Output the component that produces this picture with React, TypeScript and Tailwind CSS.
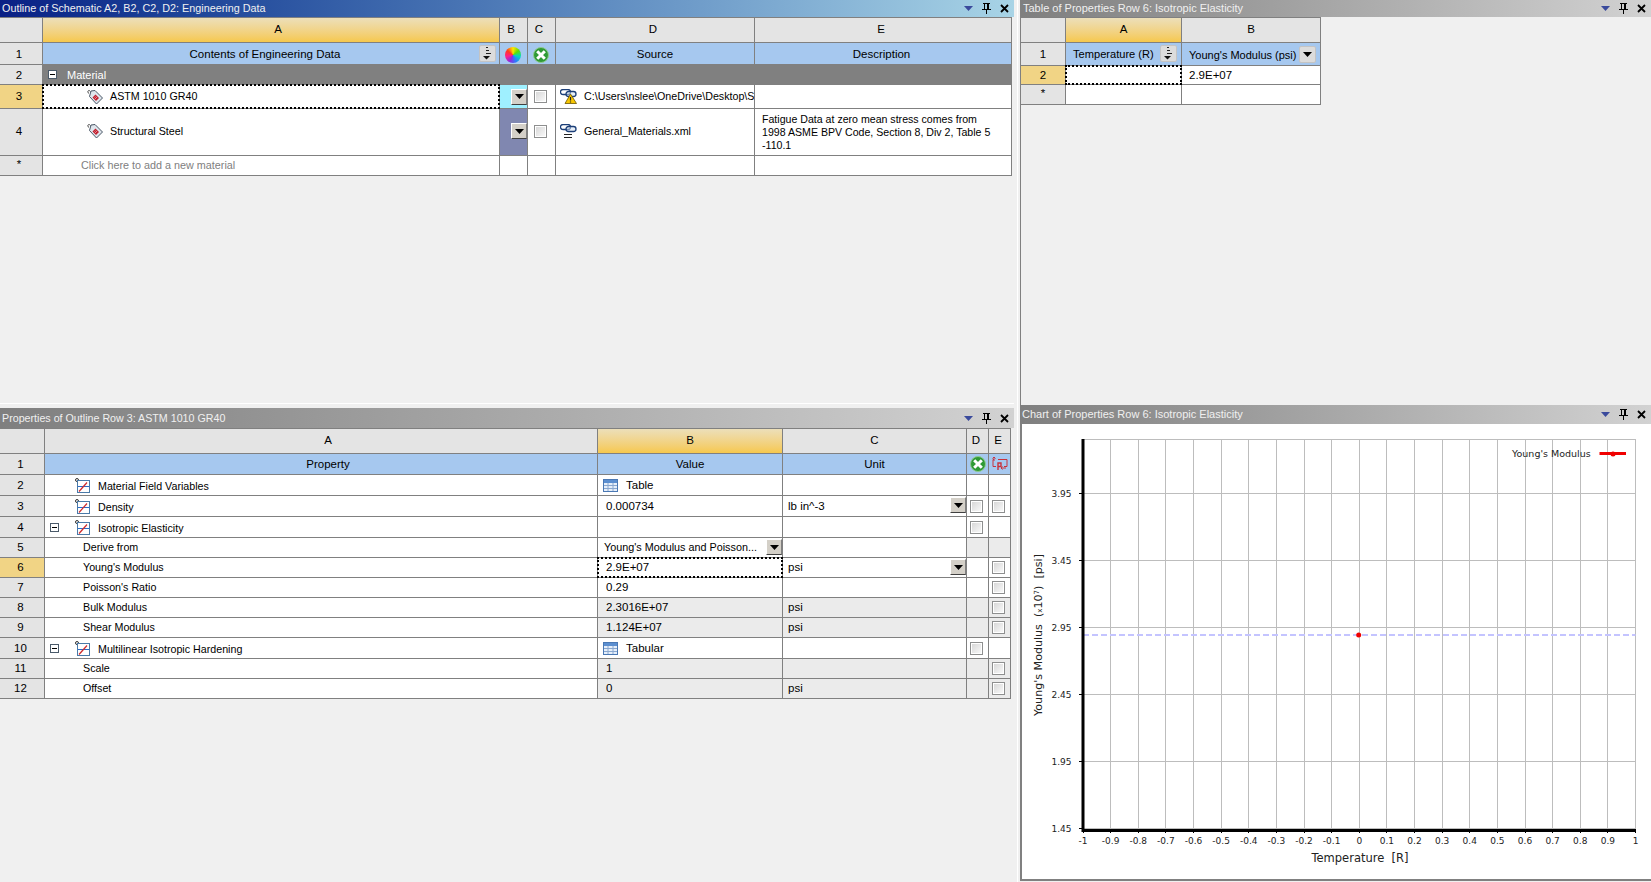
import React from "react";
import clsx from "clsx";

const cell =
  "flex shrink-0 items-center overflow-hidden whitespace-nowrap border-r border-b border-[#808080]";
// header rows sit a pixel lower than the plain rows
const hd = clsx(cell, "pt-[2px]");

const Triangle = () => (
  <svg width="9" height="5" viewBox="0 0 9 5">
    <path d="M0 0h9L4.5 5z" fill="#000" />
  </svg>
);

const DropBtn = ({ className }: { className?: string }) => (
  <div
    className={clsx(
      "flex h-[16px] w-[16px] shrink-0 items-center justify-center border border-t-white border-l-white border-r-[#808080] border-b-[#404040] bg-[#d4d0c8]",
      className
    )}
  >
    <Triangle />
  </div>
);

const Check = () => (
  <div className="h-[13px] w-[13px] shrink-0 border border-[#8e8f8f] bg-white p-[1px]">
    <div className="h-full w-full bg-linear-to-br from-[#d8d8d8] to-[#f8f8f8]" />
  </div>
);

const MinusBox = ({ className }: { className?: string }) => (
  <div
    className={clsx(
      "flex h-[9px] w-[9px] shrink-0 items-center justify-center border border-[#4a5a6a] bg-white",
      className
    )}
  >
    <div className="h-px w-[5px] bg-black" />
  </div>
);

const SortBtn = ({ className }: { className?: string }) => (
  <div
    className={clsx(
      "flex h-[17px] w-[17px] shrink-0 items-center justify-center rounded-[2px] border border-[#c4c4c4] bg-[#dcdcdc]",
      className
    )}
  >
    <svg width="9" height="13" viewBox="0 0 9 13">
      <path d="M3 0h2v1H3zM3 3h3v1H3zM3 6h5v1H3z" fill="#222" />
      <path d="M0 9h7L3.5 12.5z" fill="#111" />
    </svg>
  </div>
);

const Wheel = () => (
  <div className="h-[16px] w-[16px] shrink-0 rounded-full bg-[conic-gradient(#ffe600,#5fe000,#00d8c0,#2a7cff,#8a2be2,#ff1e8c,#ff3b1e,#ffe600)]" />
);

const GreenX = () => (
  <svg width="16" height="16" viewBox="0 0 16 16" className="shrink-0">
    <circle cx="8" cy="8" r="7.500" fill="#2f9a35" stroke="#8fc98f" />
    <path d="M4.200 4.200l7.600 7.600M11.800 4.200l-7.600 7.600" stroke="#fff" strokeWidth="3" />
  </svg>
);

const ParamIcon = () => (
  <svg width="16" height="14" viewBox="0 0 16 14" fill="none" stroke="#c8323c" className="shrink-0">
    <path d="M6 2.500h9v7h-3M4 9.500H1v-7h1" />
    <path d="M2 4V0M.5 1.500L2 0l1.500 1.500M14 11H9M10.500 9.500L9 11l1.500 1.500" />
    <path d="M6 13V6h3v3.500H6" strokeWidth="1.400" />
  </svg>
);

const TagIcon = () => (
  <svg width="16" height="16" viewBox="0 0 16 16" className="shrink-0">
    <path d="M3.500 2.500c-2-2.500-4 .5-1.500 2" fill="none" stroke="#444" />
    <path d="M4 2L8 1.500L15.500 9L9.500 15L2.500 7.500z" fill="#dfe5ec" stroke="#4a5666" />
    <path d="M8.500 5.500L12 9L9 12L5.500 8.500z" fill="#c0202f" />
    <path d="M8.500 7.500L10 9M7.500 8.500L9 10" stroke="#e88a94" />
  </svg>
);

const LinkIcon = ({ warn }: { warn?: boolean }) => (
  <svg width="17" height="15" viewBox="0 0 17 15" fill="none" className="shrink-0">
    <rect x="0.500" y="0.500" width="10" height="5" rx="2.500" stroke="#1c3f78" strokeWidth="1.300" />
    <rect x="6" y="2.500" width="10" height="5" rx="2.500" stroke="#1c3f78" strokeWidth="1.300" fill="#cfe0f2" fillOpacity="0.500" />
    {warn ? (
      <>
        <path d="M10.500 5L16.500 14.500H5z" fill="#f7c600" stroke="#6b5500" strokeWidth="0.800" />
        <path d="M10.500 8v3.500M10.500 12.500v1" stroke="#222" strokeWidth="1.200" />
      </>
    ) : (
      <path d="M4 10.500h8M4 13.500h8" stroke="#222" />
    )}
  </svg>
);

const CurveIcon = () => (
  <svg width="15" height="15" viewBox="0 0 15 15" fill="none" className="shrink-0">
    <circle cx="2" cy="2" r="1.500" stroke="#333" />
    <rect x="2.500" y="2.500" width="12" height="12" fill="#fff" stroke="#4a7aa8" />
    <path d="M3 8.500h11" stroke="#2a6ac8" />
    <path d="M4 13.500L12 4.500" stroke="#d02a2a" strokeWidth="1.200" />
  </svg>
);

const TableIcon = () => (
  <svg width="15" height="13" viewBox="0 0 15 13" className="shrink-0">
    <rect x="0.500" y="0.500" width="14" height="12" fill="#e6effa" stroke="#4a78b4" />
    <rect x="1" y="1" width="13" height="3" fill="#5c8fd0" />
    <path d="M1 6.500h13M1 9.500h13M5 4v8M10 4v8" stroke="#8aa8d0" />
  </svg>
);

const PaneControls = () => (
  <div className="ml-auto flex items-center pr-px">
    <div className="flex w-[18px] justify-center">
      <svg width="9" height="5" viewBox="0 0 9 5">
        <path d="M0 0h9L4.500 5z" fill="#3a4a9c" />
      </svg>
    </div>
    <div className="flex w-[18px] justify-center">
      <svg width="9" height="11" viewBox="0 0 9 11" fill="none" stroke="#000">
        <path d="M2.500 .5v5.500M6.500 .5v5.500M1 .5h7M0 6.500h9" />
        <path d="M4.500 7v4M5.500 1v5" />
      </svg>
    </div>
    <div className="flex w-[18px] justify-center">
      <svg width="9" height="9" viewBox="0 0 9 9">
        <path d="M1 1l7 7M8 1l-7 7" stroke="#000" strokeWidth="1.800" />
      </svg>
    </div>
  </div>
);

const PaneTitle = ({ text, className }: { text: string; className: string }) => (
  <div className={clsx("flex shrink-0 items-center bg-linear-to-r pl-[2px] text-[#f0f0f0]", className)}>
    <span>{text}</span>
    <PaneControls />
  </div>
);

const Focus = () => <div className="absolute -inset-px border-2 border-dotted border-black" />;

const topCols = ["w-[43px]", "w-[457px]", "w-[28px]", "w-[28px]", "w-[199px]", "w-[257px]"];

function OutlineTable() {
  const [c0, c1, c2, c3, c4, c5] = topCols;
  return (
    <div className="w-[1012px] border-t border-[#808080] bg-white">
      <div className="flex h-[25px]">
        <div className={clsx(cell, c0, "bg-[#e4e4e4]")} />
        <div className={clsx(cell, c1, "justify-center bg-linear-to-b from-[#ecdfb9] to-[#f6c84c] pl-[14px]")}>A</div>
        <div className={clsx(cell, c2, "justify-center bg-[#e4e4e4] pr-[5px]")}>B</div>
        <div className={clsx(cell, c3, "justify-center bg-[#e4e4e4] pr-[5px]")}>C</div>
        <div className={clsx(cell, c4, "justify-center bg-[#e4e4e4] pr-[4px]")}>D</div>
        <div className={clsx(cell, c5, "justify-center bg-[#e4e4e4] pr-[4px]")}>E</div>
      </div>
      <div className="flex h-[22px] bg-[#a6c8ef]">
        <div className={clsx(hd, c0, "justify-center bg-[#e4e4e4] pr-[4px]")}>1</div>
        <div className={clsx(hd, c1, "relative justify-center pr-[12px]")}>
          Contents of Engineering Data
          <SortBtn className="absolute top-[2px] right-[3px]" />
        </div>
        <div className={clsx(hd, c2, "pl-[5px]")}>
          <Wheel />
        </div>
        <div className={clsx(hd, c3, "pl-[5px]")}>
          <GreenX />
        </div>
        <div className={clsx(hd, c4, "justify-center")}>Source</div>
        <div className={clsx(hd, c5, "justify-center pr-[3px]")}>Description</div>
      </div>
      <div className="flex h-[20px]">
        <div className={clsx(hd, c0, "justify-center bg-[#e4e4e4] pr-[4px]")}>2</div>
        <div className="flex w-[969px] items-center border-b border-[#808080] bg-[#808080] pl-[5px] text-white">
          <MinusBox />
          <span className="ml-[10px] pt-[2px] text-[11px]">Material</span>
        </div>
      </div>
      <div className="flex h-[24px]">
        <div className={clsx(cell, c0, "justify-center bg-[#f1d485] pr-[4px]")}>3</div>
        <div className={clsx(cell, c1, "relative overflow-visible pl-[44px] text-[10.7px]")}>
          <TagIcon />
          <span className="ml-[7px]">ASTM 1010 GR40</span>
          <Focus />
        </div>
        <div className={clsx(cell, c2, "justify-end bg-[#9ff0ff]")}>
          <DropBtn />
        </div>
        <div className={clsx(cell, c3, "pl-[6px]")}>
          <Check />
        </div>
        <div className={clsx(cell, c4, "pl-[4px] text-[10.7px]")}>
          <LinkIcon warn />
          <span className="ml-[7px]">{"C:\\Users\\nslee\\OneDrive\\Desktop\\Steel.xml"}</span>
        </div>
        <div className={clsx(cell, c5)} />
      </div>
      <div className="flex h-[47px]">
        <div className={clsx(cell, c0, "justify-center bg-[#e4e4e4] pr-[4px]")}>4</div>
        <div className={clsx(cell, c1, "pb-[2px] pl-[44px] text-[10.7px]")}>
          <TagIcon />
          <span className="ml-[7px]">Structural Steel</span>
        </div>
        <div className={clsx(cell, c2, "justify-end bg-[#8087b0] pb-[2px]")}>
          <DropBtn />
        </div>
        <div className={clsx(cell, c3, "pb-px pl-[6px]")}>
          <Check />
        </div>
        <div className={clsx(cell, c4, "pb-[2px] pl-[4px] text-[10.7px]")}>
          <LinkIcon />
          <span className="ml-[7px]">General_Materials.xml</span>
        </div>
        <div className={clsx(cell, c5, "pl-[7px] text-[10.6px] leading-[13px]")}>
          <div>
            <div>Fatigue Data at zero mean stress comes from</div>
            <div>1998 ASME BPV Code, Section 8, Div 2, Table 5</div>
            <div>-110.1</div>
          </div>
        </div>
      </div>
      <div className="flex h-[20px]">
        <div className={clsx(cell, c0, "items-start justify-center bg-[#e4e4e4] pt-[3px] pr-[4px]")}>*</div>
        <div className={clsx(cell, c1, "pl-[38px] text-[10.8px] text-[#808080]")}>Click here to add a new material</div>
        <div className={clsx(cell, c2)} />
        <div className={clsx(cell, c3)} />
        <div className={clsx(cell, c4)} />
        <div className={clsx(cell, c5)} />
      </div>
    </div>
  );
}

type PropRow = {
  n: string;
  h: string;
  name: string;
  kind: "curve" | "sub";
  minus?: boolean;
  value?: string;
  table?: boolean;
  unit?: string;
  unitDrop?: boolean;
  d?: boolean;
  e?: boolean;
  gray?: boolean;
  derive?: boolean;
  focus?: boolean;
};

const propRows: PropRow[] = [
  { n: "2", h: "h-[21px]", name: "Material Field Variables", kind: "curve", value: "Table", table: true },
  { n: "3", h: "h-[21px]", name: "Density", kind: "curve", value: "0.000734", unit: "lb in^-3", unitDrop: true, d: true, e: true },
  { n: "4", h: "h-[21px]", name: "Isotropic Elasticity", kind: "curve", minus: true, d: true },
  { n: "5", h: "h-[20px]", name: "Derive from", kind: "sub", value: "Young's Modulus and Poisson...", derive: true },
  { n: "6", h: "h-[20px]", name: "Young's Modulus", kind: "sub", value: "2.9E+07", unit: "psi", unitDrop: true, e: true, focus: true },
  { n: "7", h: "h-[20px]", name: "Poisson's Ratio", kind: "sub", value: "0.29", e: true },
  { n: "8", h: "h-[20px]", name: "Bulk Modulus", kind: "sub", value: "2.3016E+07", unit: "psi", e: true, gray: true },
  { n: "9", h: "h-[20px]", name: "Shear Modulus", kind: "sub", value: "1.124E+07", unit: "psi", e: true, gray: true },
  { n: "10", h: "h-[21px]", name: "Multilinear Isotropic Hardening", kind: "curve", minus: true, value: "Tabular", table: true, d: true },
  { n: "11", h: "h-[20px]", name: "Scale", kind: "sub", value: "1", e: true, gray: true },
  { n: "12", h: "h-[20px]", name: "Offset", kind: "sub", value: "0", unit: "psi", e: true, gray: true },
];

const botCols = ["w-[45px]", "w-[553px]", "w-[185px]", "w-[184px]", "w-[22px]", "w-[22px]"];

function PropertiesTable() {
  const [c0, c1, c2, c3, c4, c5] = botCols;
  return (
    <div className="w-[1011px] border-t border-[#808080] bg-white">
      <div className="flex h-[25px]">
        <div className={clsx(cell, c0, "bg-[#e4e4e4]")} />
        <div className={clsx(cell, c1, "justify-center bg-[#e4e4e4] pl-[14px]")}>A</div>
        <div className={clsx(cell, c2, "justify-center bg-linear-to-b from-[#ecdfb9] to-[#f6c84c]")}>B</div>
        <div className={clsx(cell, c3, "justify-center bg-[#e4e4e4]")}>C</div>
        <div className={clsx(cell, c4, "justify-center bg-[#e4e4e4] pr-[3px]")}>D</div>
        <div className={clsx(cell, c5, "justify-center bg-[#e4e4e4] pr-[3px]")}>E</div>
      </div>
      <div className="flex h-[21px] bg-[#a6c8ef]">
        <div className={clsx(hd, c0, "justify-center bg-[#e4e4e4] pr-[3px]")}>1</div>
        <div className={clsx(hd, c1, "justify-center pl-[14px]")}>Property</div>
        <div className={clsx(hd, c2, "justify-center")}>Value</div>
        <div className={clsx(hd, c3, "justify-center")}>Unit</div>
        <div className={clsx(cell, c4, "pl-[3px]")}>
          <GreenX />
        </div>
        <div className={clsx(cell, c5, "pl-[3px]")}>
          <ParamIcon />
        </div>
      </div>
      {propRows.map((r) => {
        const low = r.kind === "curve" && "pt-[2px]";
        return (
          <div key={r.n} className={clsx("flex", r.h)}>
            <div className={clsx(cell, c0, "justify-center pr-[3px]", low, r.n === "6" ? "bg-[#f1d485]" : "bg-[#e4e4e4]")}>{r.n}</div>
            <div className={clsx(cell, c1, "relative text-[10.7px]", r.kind === "sub" && "pl-[38px]")}>
              {r.minus && <MinusBox className="absolute left-[5px]" />}
              {r.kind === "curve" && (
                <div className="flex items-center pl-[30px]">
                  <CurveIcon />
                  <span className="ml-[8px] pt-[2px]">{r.name}</span>
                </div>
              )}
              {r.kind === "sub" && r.name}
            </div>
            <div
              className={clsx(
                cell,
                c2,
                "relative",
                r.gray && "bg-[#ebebeb]",
                r.table ? "pl-[5px]" : "pl-[8px]",
                r.focus && "overflow-visible"
              )}
            >
              {r.table && <TableIcon />}
              <span className={clsx(low, r.table && "ml-[8px]", r.derive && "-ml-[2px] text-[10.8px]")}>{r.value}</span>
              {r.derive && <DropBtn className="absolute right-0 top-px" />}
              {r.focus && <Focus />}
            </div>
            <div className={clsx(cell, c3, "relative pl-[5px]", r.gray && "bg-[#ebebeb]")}>
              <span className={clsx(low)}>{r.unit}</span>
              {r.unitDrop && <DropBtn className="absolute right-0 top-[1px]" />}
            </div>
            <div className={clsx(cell, c4, "pl-[3px]", (r.gray || r.derive) && "bg-[#ebebeb]")}>{r.d && <Check />}</div>
            <div className={clsx(cell, c5, "pl-[3px]", (r.gray || r.derive) && "bg-[#ebebeb]")}>{r.e && <Check />}</div>
          </div>
        );
      })}
    </div>
  );
}

function LookupTable() {
  return (
    <div className="w-[300px] border-t border-[#808080] bg-white">
      <div className="flex h-[25px]">
        <div className={clsx(cell, "w-[45px] bg-[#e4e4e4]")} />
        <div className={clsx(cell, "w-[116px] justify-center bg-linear-to-b from-[#ecdfb9] to-[#f6c84c]")}>A</div>
        <div className={clsx(cell, "w-[139px] justify-center bg-[#e4e4e4]")}>B</div>
      </div>
      <div className="flex h-[23px] bg-[#a6c8ef]">
        <div className={clsx(hd, "w-[45px] justify-center bg-[#e4e4e4]")}>1</div>
        <div className={clsx(hd, "relative w-[116px] pl-[7px] text-[11.1px]")}>
          Temperature (R)
          <SortBtn className="absolute top-[2px] right-[4px]" />
        </div>
        <div className={clsx(hd, "relative w-[139px] pl-[7px] text-[11px]")}>
          Young's Modulus (psi)
          <div className="absolute top-[3px] right-[4px] flex h-[17px] w-[17px] items-center justify-center rounded-[2px] border border-[#c4c4c4] bg-[#dcdcdc]">
            <Triangle />
          </div>
        </div>
      </div>
      <div className="flex h-[19px]">
        <div className={clsx(hd, "w-[45px] justify-center bg-[#f1d485]")}>2</div>
        <div className={clsx(cell, "relative w-[116px] overflow-visible")}>
          <Focus />
        </div>
        <div className={clsx(hd, "w-[139px] pl-[7px]")}>2.9E+07</div>
      </div>
      <div className="flex h-[20px]">
        <div className={clsx(cell, "w-[45px] items-start justify-center bg-[#e4e4e4] pt-[3px]")}>*</div>
        <div className={clsx(cell, "w-[116px]")} />
        <div className={clsx(cell, "w-[139px]")} />
      </div>
    </div>
  );
}

const xTicks = ["-1", "-0.9", "-0.8", "-0.7", "-0.6", "-0.5", "-0.4", "-0.3", "-0.2", "-0.1", "0", "0.1", "0.2", "0.3", "0.4", "0.5", "0.6", "0.7", "0.8", "0.9", "1"];
const yTicks = [
  { y: 493.5, t: "3.95" },
  { y: 560.5, t: "3.45" },
  { y: 627.5, t: "2.95" },
  { y: 694.5, t: "2.45" },
  { y: 761.5, t: "1.95" },
  { y: 828.5, t: "1.45" },
];

// drawn in page coordinates, the viewBox takes care of the pane offset
function Chart() {
  const x0 = 1083;
  const x1 = 1635.5;
  const step = (x1 - x0) / 20;
  return (
    <svg
      viewBox="1022 424 629 455"
      width="629"
      height="455"
      className="block font-['DejaVu_Sans',sans-serif]"
    >
      <g stroke="#bdbdbd" shapeRendering="crispEdges">
        <path d={`M${x0} 439.500H${x1}`} />
        {xTicks.map((_, i) => (
          <path key={i} d={`M${x0 + i * step} 439V829`} />
        ))}
        {yTicks.map((t) => (
          <path key={t.t} d={`M${x0} ${t.y}H${x1}`} />
        ))}
      </g>
      <path d={`M${x0} 635H${x1}`} stroke="#c4c4ff" strokeWidth="2" strokeDasharray="6 3" />
      <circle cx="1358.700" cy="635" r="2.500" fill="#f00000" />
      <g stroke="#000" shapeRendering="crispEdges">
        {xTicks.map((_, i) => (
          <path key={i} d={`M${x0 + i * step} 829V833`} />
        ))}
        {yTicks.map((t) => (
          <path key={t.t} d={`M1079 ${t.y}H1083`} />
        ))}
      </g>
      <path d={`M1083 439V830.500H${x1}`} fill="none" stroke="#000" strokeWidth="3" />
      <g fontSize="9" fill="#222">
        {xTicks.map((t, i) => (
          <text key={t} x={x0 + i * step} y="844" textAnchor="middle">
            {t}
          </text>
        ))}
        {yTicks.map((t) => (
          <text key={t.t} x="1071.500" y={t.y + 3.500} textAnchor="end">
            {t.t}
          </text>
        ))}
      </g>
      <text x="1360" y="862" fontSize="11.500" textAnchor="middle" fill="#222">
        {"Temperature\u00a0\u00a0[R]"}
      </text>
      <text transform="rotate(-90 1042 635)" x="1042" y="635" fontSize="11.100" textAnchor="middle" fill="#222">
        {"Young's Modulus\u00a0\u00a0("}
        <tspan fontSize="7">x</tspan>
        10
        <tspan fontSize="7" dy="-3">
          7
        </tspan>
        <tspan dy="3">{")\u00a0\u00a0[psi]"}</tspan>
      </text>
      <text x="1512" y="456.500" fontSize="9.500" fill="#222">
        Young's Modulus
      </text>
      <path d="M1599.500 453.500H1626" stroke="#f00000" strokeWidth="3" />
      <circle cx="1613" cy="454" r="2.500" fill="#f00000" />
    </svg>
  );
}

export default function App() {
  return (
    <div className="flex h-[882px] w-[1651px] overflow-hidden bg-[#f0f0f0] font-['Liberation_Sans',Arial,sans-serif] text-[11.5px] leading-none text-black">
      <div className="flex w-[1014px] shrink-0 flex-col">
        <div className="h-[403px] shrink-0">
          <PaneTitle text="Outline of Schematic A2, B2, C2, D2: Engineering Data" className="h-[17px] from-[#0a1f85] to-[#a8d4e6] text-[10.8px]" />
          <OutlineTable />
        </div>
        <div className="mb-[4px] h-px shrink-0 bg-white" />
        <PaneTitle text="Properties of Outline Row 3: ASTM 1010 GR40" className="h-[20px] from-[#7f7f7f] to-[#d2d2d2] text-[10.7px]" />
        <PropertiesTable />
      </div>
      <div className="flex w-[6px] shrink-0 justify-center">
        <div className="w-px bg-white" />
      </div>
      <div className="flex w-[631px] shrink-0 flex-col">
        <div className="h-[405px] shrink-0 border-l border-[#808080]">
          <PaneTitle text="Table of Properties Row 6: Isotropic Elasticity" className="h-[17px] from-[#7f7f7f] to-[#d2d2d2] text-[11px]" />
          <LookupTable />
        </div>
        <PaneTitle text="Chart of Properties Row 6: Isotropic Elasticity" className="h-[19px] from-[#7f7f7f] to-[#d2d2d2] text-[11px]" />
        <div className="h-[457px] shrink-0 border-b-2 border-l-2 border-[#808080] bg-white">
          <Chart />
        </div>
      </div>
    </div>
  );
}
